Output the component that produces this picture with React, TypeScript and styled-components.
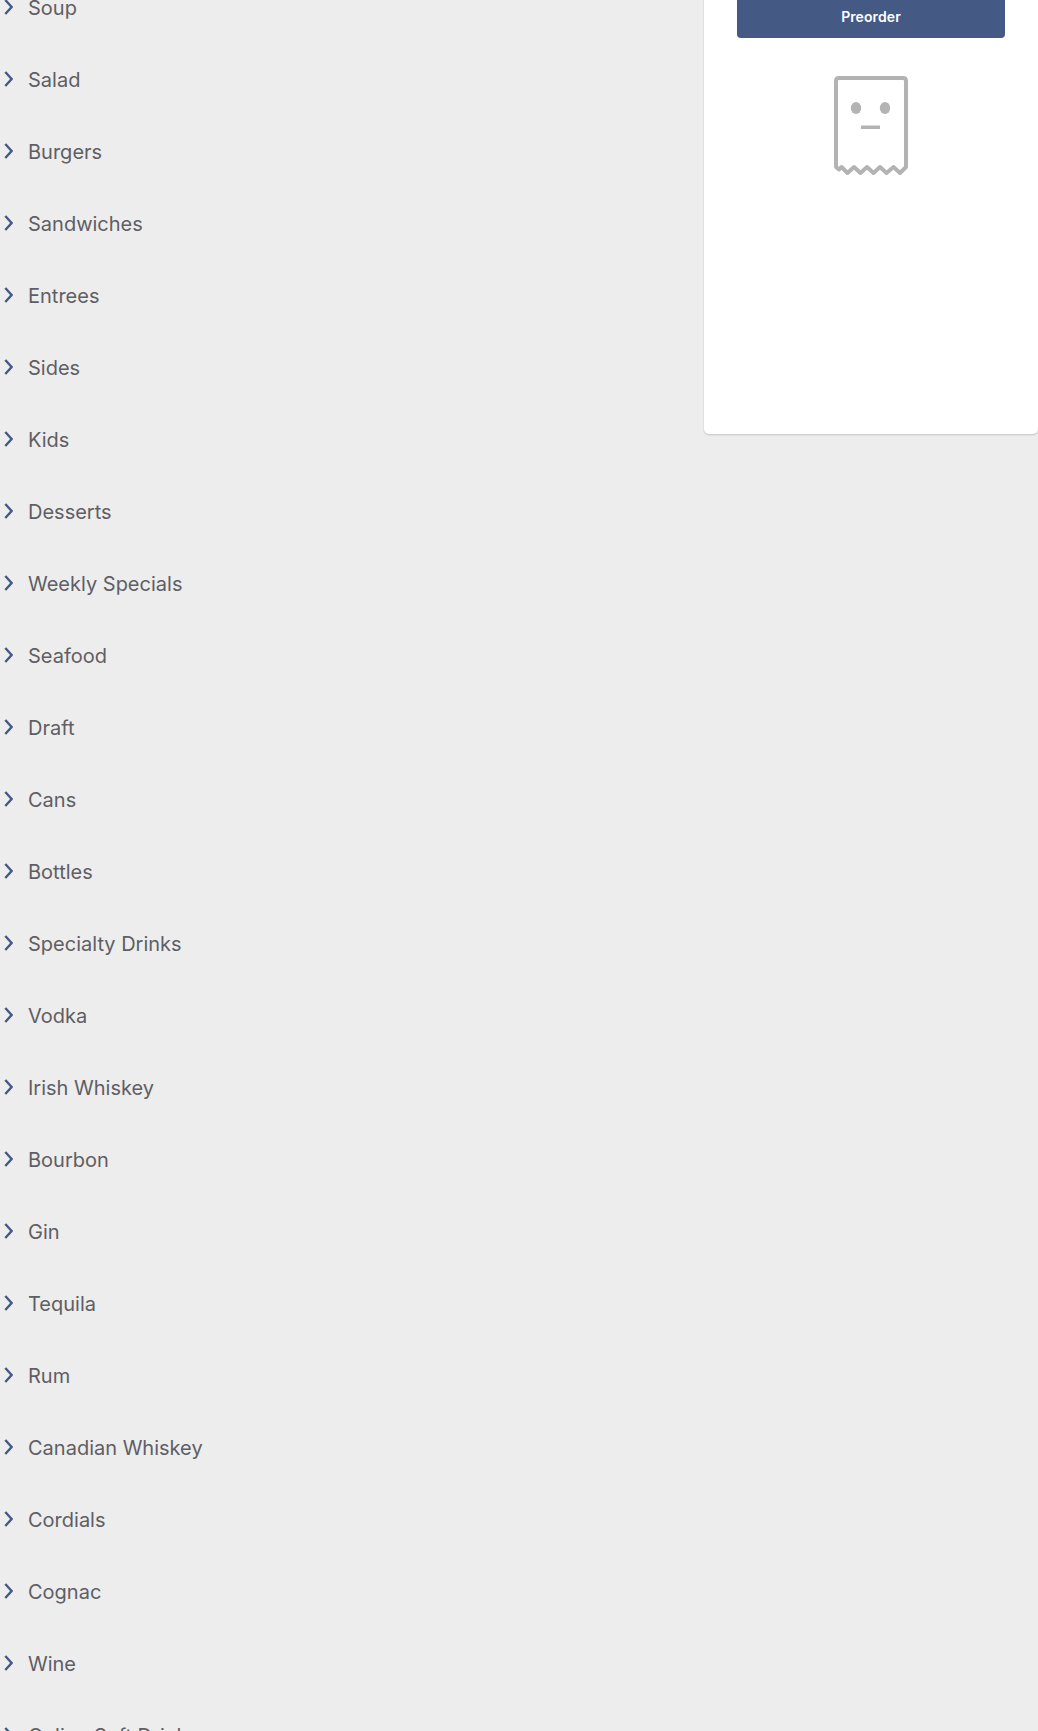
import React from "react";
import styled, { createGlobalStyle } from "styled-components";

const categories = [
  "Soup",
  "Salad",
  "Burgers",
  "Sandwiches",
  "Entrees",
  "Sides",
  "Kids",
  "Desserts",
  "Weekly Specials",
  "Seafood",
  "Draft",
  "Cans",
  "Bottles",
  "Specialty Drinks",
  "Vodka",
  "Irish Whiskey",
  "Bourbon",
  "Gin",
  "Tequila",
  "Rum",
  "Canadian Whiskey",
  "Cordials",
  "Cognac",
  "Wine",
  "Online Soft Drinks",
];

const Chevron = () => (
  <ChevronIcon viewBox="0 0 9 16" aria-hidden="true">
    <path d="M1.3 1 L7.6 8 L1.3 15" />
  </ChevronIcon>
);

const EmptyReceipt = () => (
  <ReceiptIcon viewBox="0 0 74 100" aria-hidden="true">
    <path
      className="outline"
      d="M2 91 V5 Q2 2 5 2 H69 Q72 2 72 5 V91 L66 97 L59.5 91 L52.5 97 L46 91 L39.5 97 L33 91 L26.5 97 L20 91 L13.5 97 L7.5 91 L5 93.5 Z"
    />
    <ellipse cx="22" cy="32" rx="5.2" ry="6" />
    <ellipse cx="51" cy="32" rx="5.2" ry="6" />
    <rect x="27" y="49.5" width="19" height="3.6" rx="0.5" />
  </ReceiptIcon>
);

const App = () => {
  return (
    <>
      <GlobalStyle />
      <Page>
        <CategoryList>
          {categories.map((name) => (
            <CategoryRow key={name}>
              <Chevron />
              <CategoryName>{name}</CategoryName>
            </CategoryRow>
          ))}
        </CategoryList>
        <OrderCard>
          <PreorderButton type="button">Preorder</PreorderButton>
          <EmptyReceipt />
        </OrderCard>
      </Page>
    </>
  );
};

export default App;

const GlobalStyle = createGlobalStyle`
  html, body {
    margin: 0;
    padding: 0;
    height: 1731px;
    overflow: hidden;
    background-color: #ededed;
  }
`;

const Page = styled.div`
  display: flex;
  justify-content: space-between;
  align-items: flex-start;
  margin-top: -28px;
  font-family: Inter, "Liberation Sans", sans-serif;
`;

const CategoryList = styled.ul`
  margin: 0;
  padding: 0;
  list-style: none;
`;

const CategoryRow = styled.li`
  display: flex;
  align-items: center;
  height: 72px;
  padding-left: 4px;
`;

const ChevronIcon = styled.svg`
  flex: none;
  width: 9px;
  height: 16px;
  margin-top: -2px;

  path {
    fill: none;
    stroke: #435a84;
    stroke-width: 2.4;
  }
`;

const CategoryName = styled.span`
  margin-left: 15px;
  color: #5e5e64;
  font-size: 20px;
  font-weight: 400;
`;

const OrderCard = styled.aside`
  display: flex;
  flex-direction: column;
  align-items: center;
  box-sizing: border-box;
  width: 334px;
  height: 462px;
  padding-top: 24px;
  border-radius: 0 0 5px 5px;
  background-color: #ffffff;
  box-shadow: 0 1px 2px rgba(0, 0, 0, 0.18);
`;

const PreorderButton = styled.button`
  width: 268px;
  height: 42px;
  padding: 0 0 2px;
  border: none;
  border-radius: 4px;
  background-color: #445a84;
  color: #ffffff;
  font-family: inherit;
  font-size: 14px;
  font-weight: 600;
  letter-spacing: 0.1px;
`;

const ReceiptIcon = styled.svg`
  width: 74px;
  height: 100px;
  margin-top: 38px;
  fill: #b3b3b3;

  .outline {
    fill: none;
    stroke: #b3b3b3;
    stroke-width: 4;
    stroke-linejoin: round;
  }
`;
